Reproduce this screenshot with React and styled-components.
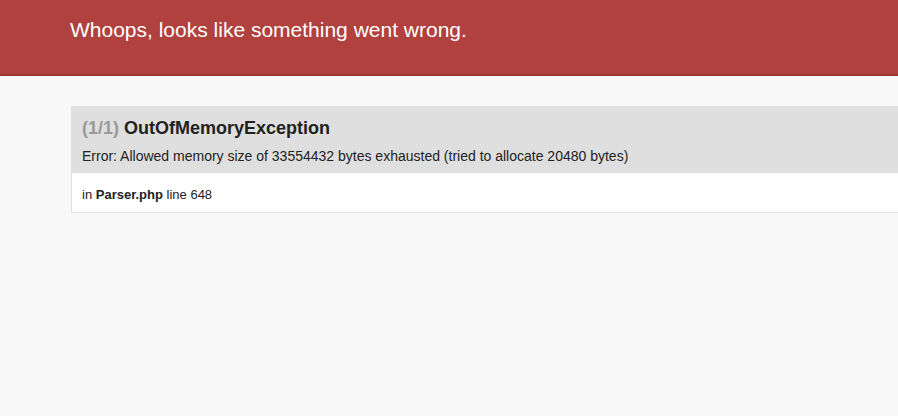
import React from 'react'
import styled, { createGlobalStyle } from 'styled-components'

const GlobalStyle = createGlobalStyle`
  html, body {
    margin: 0;
    padding: 0;
    background: #f9f9f9;
    overflow: hidden;
  }
  body {
    color: #222;
    font: 14px/1.4 "Liberation Sans", Arial, Helvetica, sans-serif;
    height: 416px;
  }
`

const Summary = styled.div`
  background: #b0413e;
  border-bottom: 2px solid #9a3936;
  height: 74px;
  margin-bottom: 30px;
`

const Container = styled.div`
  padding: 0 0 0 70px;
`

const Heading = styled.h1`
  margin: 0;
  padding-top: 16px;
  font-size: 21px;
  font-weight: normal;
  line-height: 28px;
  color: #fff;
`

const Trace = styled.div`
  background: #fff;
  border: 1px solid #e0e0e0;
  border-right: none;
  margin-left: 1px;
  margin-right: -20px;
`

const TraceHead = styled.div`
  background: #dfdfdf;
  padding: 9px 10px 8px 10px;
`

const Title = styled.h2`
  margin: 0;
  font-size: 18px;
  font-weight: bold;
  line-height: 24px;
  color: #222;
`

const Count = styled.span`
  color: #999;
`

const Message = styled.div`
  margin-top: 7px;
  font-size: 14px;
  line-height: 18px;
  color: #222;
`

const Location = styled.div`
  padding: 14px 10px 10px;
  font-size: 13px;
  line-height: 15px;
  color: #222;
`

export default function App() {
  return (
    <>
      <GlobalStyle />
      <Summary>
        <Container>
          <Heading>Whoops, looks like something went wrong.</Heading>
        </Container>
      </Summary>
      <Container>
        <Trace>
          <TraceHead>
            <Title>
              <Count>(1/1)</Count> OutOfMemoryException
            </Title>
            <Message>
              Error: Allowed memory size of 33554432 bytes exhausted (tried to allocate 20480 bytes)
            </Message>
          </TraceHead>
          <Location>
            in <b>Parser.php</b> line 648
          </Location>
        </Trace>
      </Container>
    </>
  )
}
